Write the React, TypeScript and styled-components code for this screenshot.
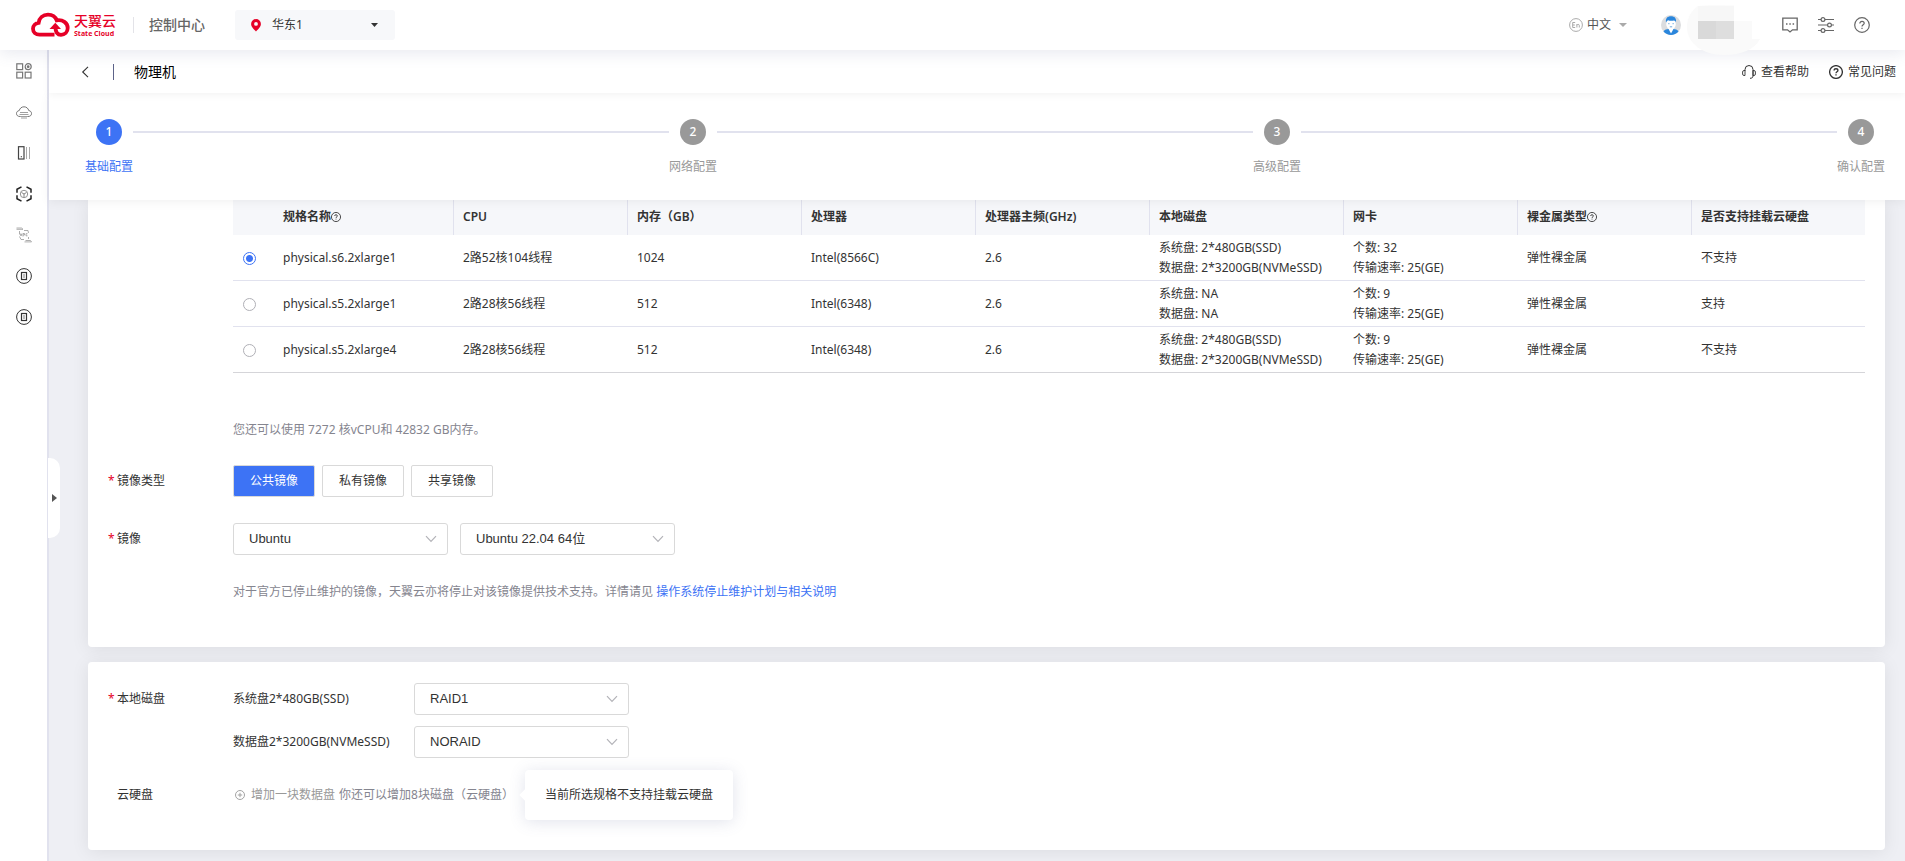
import React from "react";
import styled, { createGlobalStyle, css } from "styled-components";

const BLUE = "#3d73f5";
const INK = "#333333";
const MUTED = "#85858f";
const LINE = "#e1e2ee";

const GlobalStyle = createGlobalStyle`
  *, *::before, *::after { box-sizing: border-box; }
  body {
    margin: 0;
    color: ${INK};
    background: #eeeff4;
    font-family: "Noto Sans", "Noto Sans CJK SC", sans-serif;
    font-size: 12px;
    line-height: 20px;
  }
  button, select { font: inherit; color: inherit; }
  svg { display: block; flex: none; }
  a { text-decoration: none; color: inherit; }
`;

const Shell = styled.div`
  display: flex;
  flex-direction: column;
  min-height: 100vh;
`;

/* ---------- top bar ---------- */

const TopBar = styled.header`
  position: relative;
  z-index: 3;
  display: flex;
  align-items: center;
  height: 50px;
  padding: 0 35px 0 31px;
  background: #fff;
  box-shadow: 0 4px 14px rgba(90, 100, 150, 0.13);
`;

const Brand = styled.a`
  display: flex;
  align-items: center;
  gap: 4px;
  width: 87px;
  color: #e60027;
`;

const BrandText = styled.span`
  display: flex;
  flex-direction: column;
  white-space: nowrap;
`;

const BrandName = styled.strong`
  font-size: 14px;
  line-height: 18px;
  font-weight: 500;
`;

const BrandSub = styled.span`
  font-family: "Open Sans", sans-serif;
  font-size: 7px;
  line-height: 8px;
  font-weight: 700;
`;

const TopDivider = styled.span`
  width: 1px;
  height: 16px;
  margin: 0 15px;
  background: #e3e3e8;
`;

const ConsoleLink = styled.a`
  margin-right: 30px;
  font-size: 14px;
  font-weight: 500;
  color: #666;
`;

const RegionBox = styled.label`
  display: grid;
  align-items: center;
  width: 160px;
  height: 30px;
  & > * { grid-area: 1 / 1; }
  & > svg { z-index: 1; pointer-events: none; }
  & > svg:first-child { margin-left: 16px; }
  & > svg:last-child { justify-self: end; margin-right: 17px; }
`;

const RegionSelect = styled.select`
  appearance: none;
  width: 100%;
  height: 100%;
  padding: 0 30px 0 37px;
  border: 0;
  border-radius: 3px;
  background: #f7f8fa;
`;

const TopTools = styled.div`
  display: flex;
  align-items: center;
  align-self: stretch;
  margin-left: auto;
`;

const LanguageButton = styled.button`
  display: flex;
  align-items: center;
  gap: 4px;
  margin-right: 34px;
  padding: 0;
  border: 0;
  background: none;
  color: #555;
  & > svg:last-child { margin-left: 4px; }
`;

const UserButton = styled.button`
  display: flex;
  align-items: center;
  gap: 6px;
  height: 50px;
  margin-right: 22px;
  padding: 0;
  border: 0;
  background: none;
  & > svg { overflow: visible; }
`;

const IconGroup = styled.div`
  display: flex;
  gap: 20px;
`;

const IconButton = styled.button`
  padding: 0;
  border: 0;
  background: none;
  color: #666;
`;

/* ---------- frame ---------- */

const Body = styled.div`
  position: relative;
  display: flex;
  flex: 1;
`;

const Sidebar = styled.nav`
  display: flex;
  flex-direction: column;
  align-items: center;
  gap: 25px;
  flex: none;
  width: 49px;
  padding-top: 13px;
  background: #fff;
  border-right: 2px solid ${LINE};
`;

const SideLink = styled.a<{ $faint?: boolean }>`
  color: ${(p) => (p.$faint ? "#999" : "#444")};
`;

const PullTab = styled.button`
  position: absolute;
  left: 48px;
  top: 408px;
  z-index: 1;
  display: flex;
  align-items: center;
  width: 12px;
  height: 80px;
  padding: 0 0 0 4px;
  border: 0;
  border-radius: 0 10px 10px 0;
  background: #fff;
`;

const Main = styled.main`
  flex: 1;
  min-width: 0;
`;

const TitleBar = styled.div`
  position: relative;
  z-index: 2;
  display: flex;
  align-items: center;
  height: 43px;
  padding: 0 9px 0 31px;
  background: #fff;
  box-shadow: 0 2px 8px rgba(0, 0, 0, 0.05);
`;

const BackButton = styled.button`
  padding: 0;
  border: 0;
  background: none;
`;

const TitleDivider = styled.span`
  width: 1px;
  height: 16px;
  margin: 0 20px 0 22px;
  background: #5d6389;
`;

const Title = styled.h1`
  margin: 0;
  font-size: 14px;
  line-height: 20px;
  font-weight: 400;
  color: #000;
`;

const HelpLinks = styled.div`
  display: flex;
  gap: 20px;
  margin-left: auto;
`;

const HelpLink = styled.a`
  display: flex;
  align-items: center;
  gap: 5px;
`;

/* ---------- stepper ---------- */

const Steps = styled.ol`
  position: relative;
  z-index: 1;
  display: flex;
  margin: 0;
  height: 107px;
  padding: 26px 20px 0 36px;
  list-style: none;
  background: #fff;
  box-shadow: 0 2px 10px rgba(0, 0, 0, 0.06);
`;

const Step = styled.li<{ $active?: boolean }>`
  display: flex;
  flex: ${(p) => (p.$active ? "none" : "1")};
  color: ${(p) => (p.$active ? BLUE : "#999")};
  &::before {
    content: ${(p) => (p.$active ? "none" : '""')};
    flex: 1;
    height: 2px;
    margin-top: 12px;
    background: ${LINE};
  }
`;

const StepHead = styled.div`
  display: flex;
  flex-direction: column;
  align-items: center;
  gap: 12px;
  width: 48px;
  white-space: nowrap;
`;

const StepDot = styled.span<{ $active?: boolean }>`
  width: 26px;
  height: 26px;
  border-radius: 50%;
  background: ${(p) => (p.$active ? BLUE : "#999")};
  color: #fff;
  font-weight: 500;
  line-height: 26px;
  text-align: center;
`;

/* ---------- form cards ---------- */

const Content = styled.div`
  display: flex;
  flex-direction: column;
  gap: 15px;
  padding: 0 20px 11px 39px;
`;

const Card = styled.section<{ $joined?: boolean }>`
  padding: ${(p) => (p.$joined ? "0 20px 45px" : "21px 20px 45px")};
  border-radius: ${(p) => (p.$joined ? "0 0 4px 4px" : "4px")};
  background: #fff;
  box-shadow: 0 2px 18px rgba(0, 0, 0, 0.08);
`;

const Indent = styled.div`
  padding-left: 125px;
`;

const Hint = styled.p<{ $top: number; $bottom?: number }>`
  margin: ${(p) => p.$top}px 0 ${(p) => p.$bottom ?? 0}px;
  color: ${MUTED};
  a { color: ${BLUE}; }
`;

const FormRow = styled.div<{ $top?: number }>`
  display: flex;
  align-items: center;
  margin-top: ${(p) => p.$top ?? 0}px;
`;

const RowLabel = styled.span<{ $required?: boolean }>`
  flex: none;
  width: 125px;
  padding-left: 9px;
  ${(p) =>
    p.$required &&
    css`
      padding-left: 0;
      &::before {
        content: "*";
        display: inline-block;
        width: 9px;
        color: #e60027;
      }
    `}
`;

const DiskLabel = styled.label`
  flex: none;
  width: 181px;
`;

const Choices = styled.div`
  display: flex;
  gap: 7px;
`;

const Choice = styled.button<{ $on?: boolean }>`
  width: 82px;
  height: 32px;
  padding: 0;
  border: 1px solid #d9d9d9;
  border-radius: 2px;
  background: ${(p) => (p.$on ? BLUE : "#fff")};
  color: ${(p) => (p.$on ? "#fff" : INK)};
`;

const SelectPair = styled.div`
  display: flex;
  gap: 12px;
`;

const SelectBox = styled.span`
  display: grid;
  align-items: center;
  width: 215px;
  height: 32px;
  & > * { grid-area: 1 / 1; }
  & > svg {
    justify-self: end;
    margin-right: 11px;
    pointer-events: none;
  }
`;

const Select = styled.select`
  appearance: none;
  width: 100%;
  height: 100%;
  padding: 0 30px 0 15px;
  border: 1px solid #d9d9d9;
  border-radius: 3px;
  background: #fff;
  font-family: "Liberation Sans", "Noto Sans CJK SC", sans-serif;
  font-size: 13px;
`;

const AddLine = styled.div`
  position: relative;
  display: flex;
  gap: 2px;
  color: ${MUTED};
`;

const AddButton = styled.button`
  display: flex;
  align-items: center;
  gap: 6px;
  padding: 0 2px;
  border: 0;
  background: none;
  color: #999;
`;

const Tooltip = styled.div`
  position: absolute;
  top: 50%;
  left: calc(100% + 11px);
  transform: translateY(-50%);
  padding: 15px 20px;
  border-radius: 4px;
  background: #fff;
  color: ${INK};
  white-space: nowrap;
  box-shadow: 0 2px 16px rgba(90, 100, 150, 0.18);
  &::before {
    content: "";
    position: absolute;
    left: -4px;
    top: 21px;
    width: 8px;
    height: 8px;
    background: #fff;
    transform: rotate(45deg);
  }
`;

/* ---------- table ---------- */

const Table = styled.table`
  width: 100%;
  table-layout: fixed;
  border-spacing: 0;
`;

const Th = styled.th<{ $width?: number; $divided?: boolean }>`
  width: ${(p) => (p.$width ? `${p.$width}px` : "auto")};
  height: 35px;
  padding: 0 0 2px ${(p) => (p.$divided ? 9 : 10)}px;
  border-left: ${(p) => (p.$divided ? `1px solid ${LINE}` : "0")};
  background: #f6f7fa;
  font-weight: 600;
  text-align: left;
  white-space: nowrap;
  svg { display: inline-block; vertical-align: -1px; }
`;

const Td = styled.td`
  padding: 3px 0 2px 10px;
  border-bottom: 1px solid ${LINE};
  white-space: nowrap;
  tr:last-child & { border-bottom-color: #d5d5d9; }
`;

const Radio = styled.input`
  appearance: none;
  display: block;
  width: 13px;
  height: 13px;
  margin: 0;
  border: 1px solid #b0b0b6;
  border-radius: 50%;
  background: #fff;
  &:checked {
    border-color: ${BLUE};
    background: radial-gradient(circle, ${BLUE} 3px, #fff 4px);
  }
`;

/* ---------- drawings ---------- */

const QuestionIcon = ({ size, weight = 1 }: { size: number; weight?: number }) => (
  <svg width={size} height={size} viewBox="0 0 16 16" fill="none" stroke="currentColor" strokeWidth={weight}>
    <circle cx="8" cy="8" r="7.3" />
    <path d="M5.8 6.4c0-1.3 1-2.1 2.2-2.1s2.2.8 2.2 2c0 1.400-2.200 1.600-2.200 3.200" />
    <path d="M8 10.700v1.300" />
  </svg>
);

const Caret = ({ width, height, color }: { width: number; height: number; color: string }) => (
  <svg width={width} height={height} viewBox="0 0 8 5" preserveAspectRatio="none" fill={color}>
    <path d="M0 0h8L4 5z" />
  </svg>
);

const Chevron = () => (
  <svg width="12" height="8" viewBox="0 0 12 8" fill="none" stroke="#b3b3b8" strokeWidth="1.200">
    <path d="M1 1.200l5 5.300 5-5.300" />
  </svg>
);

const BrandMark = () => (
  <svg width="39" height="26" viewBox="0 0 39 26" fill="none" stroke="currentColor" strokeWidth="3.800">
    <path d="M23.500 22.700H8.500C4.800 22.700 2 20.200 2 16.800c0-3.300 2.400-5.500 5.600-5.900C8.200 6 12 2.700 17 2.700c4.200 0 7.400 2.200 8.700 5.600 6-.9 11 2.400 11 7.700 0 4-3 6.800-6.700 6.800-4 0-5.500-3-5.700-8" />
    <path d="M18.500 17l5.800-6.200 5.700 6.200z" fill="currentColor" stroke="none" />
  </svg>
);

const sideIcon = { width: 16, height: 16, viewBox: "0 0 16 16", fill: "none", stroke: "currentColor" };

const AppsIcon = () => (
  <svg {...sideIcon} stroke="#777" strokeWidth="1.200">
    <rect x=".8" y=".8" width="5.800" height="5.800" />
    <rect x=".8" y="9.200" width="5.800" height="5.800" />
    <rect x="9.200" y="9.200" width="5.800" height="5.800" />
    <circle cx="12.200" cy="3.700" r="3" />
    <circle cx="12.200" cy="3.700" r=".8" fill="currentColor" />
  </svg>
);

const CloudIcon = () => (
  <svg {...sideIcon} stroke="#666">
    <path d="M4 12.500c-2 0-3.500-1-3.500-3 0-1.700 1.200-2.700 2.700-2.900C3.800 4.300 5.600 2.800 8 2.800s4.200 1.500 4.800 3.800c1.500.2 2.700 1.200 2.700 2.900 0 2-1.500 3-3.500 3" strokeWidth=".9" />
    <path d="M4 8.500h8M3.500 10.500h9M4 12.500h8M5 14h6" stroke="#888" strokeWidth=".8" />
  </svg>
);

const ServerIcon = () => (
  <svg {...sideIcon}>
    <rect x="2.500" y="1.700" width="5.500" height="12.300" strokeWidth="1.200" />
    <path d="M5.300 11v1.300" />
    <path d="M10.500 2v12M13.500 2v12" stroke="#aaa" />
  </svg>
);

const HexIcon = () => (
  <svg {...sideIcon} stroke="#222">
    <path d="M5.500.8L1 3.300v3.500M1 9.200v3.500l4.500 2.500M10.500.8L15 3.300v3.500M15 9.200v3.500l-4.500 2.500" strokeWidth="1.500" />
    <circle cx="8" cy="8" r="3.700" stroke="#888" strokeWidth=".9" />
    <path d="M5.500 6.500L8 8l2.500-1.500M8 8v3" stroke="#777" strokeWidth=".9" />
  </svg>
);

const VpcIcon = () => (
  <svg {...sideIcon} strokeWidth=".8">
    <path d="M.5 2.300h6.500M.5 1h5l1.500 1.300M3.500 4v3.500M3.500 9.500L5 12.500h3M8 3.500h4l.5 2.500M12.500 10v2M8.500 14.900h7M9.500 13.500h5l1 1.400" />
    <path d="M4.300 6.500l.7 2.500.9-2.500M7 9.500v-3h1.500v1.500H7M11.500 6.700H10v2.100h1.500" />
  </svg>
);

const RingIcon = () => (
  <svg {...sideIcon} stroke="#333">
    <circle cx="8" cy="8" r="7.400" strokeWidth="1" />
    <rect x="5.500" y="4.500" width="5" height="7" strokeWidth="1.200" />
    <path d="M8 6v4" stroke="#aaa" strokeWidth="1.500" />
  </svg>
);

const PinIcon = () => (
  <svg width="10" height="13" viewBox="0 0 10 13" fill="#e60027">
    <path fillRule="evenodd" d="M5 0a4.900 4.900 0 0 1 4.900 4.900C9.900 8 6.500 10.500 5 12.500 3.500 10.500.1 8 .1 4.900A4.900 4.900 0 0 1 5 0zm0 3a1.900 1.900 0 1 0 0 3.800A1.900 1.900 0 0 0 5 3z" />
  </svg>
);

const EnIcon = () => (
  <svg width="14" height="14" viewBox="0 0 14 14" fill="none" stroke="#a0a0a0" strokeWidth=".9">
    <circle cx="7" cy="7" r="6.400" />
    <path d="M6.200 4.500H3.700v5h2.500M3.700 7h2.200M7.900 9.500V6M7.900 7.200c.4-1 2.400-1.200 2.400.3v2" />
  </svg>
);

const AvatarIcon = () => (
  <svg width="20" height="20" viewBox="0 0 20 20">
    <circle cx="10" cy="10" r="10" fill="#dcdddf" />
    <path d="M2.500 16.500C3.500 14.600 6 14.200 7.500 14h5c1.500.2 4 .6 5 2.500A10 10 0 0 1 2.500 16.500z" fill="#2a86dc" />
    <path d="M7.300 13.500h5.400L10 18.500z" fill="#fff" />
    <ellipse cx="10" cy="9" rx="4.800" ry="5.500" fill="#fff" />
    <path d="M5 7.500C4.300 3.300 6.500 1.300 10 1.300s5.700 2 5 6.200C14.500 6 14 5.600 13 5.500c-2 .5-4.500.3-6-.3C6 5.700 5.400 6.500 5 7.500z" fill="#2a86dc" />
    <path d="M7.200 8.700h1.300M11.500 8.700h1.300M8.800 11.800h2.400" stroke="#4b93d8" strokeWidth=".8" />
  </svg>
);

const HiddenName = () => (
  <svg width="73" height="50" viewBox="0 0 73 50">
    <path d="M11 6C18 5 28 5 47 5.500V21H65v18h8c-5 10-18 16-36 16C14 55 0 42 0 27c0-9 4-16 11-21z" fill="#fafafa" />
    <path d="M11 6h36v15H11z" fill="#f7f7f7" />
    <path d="M11 21h18v18H11z" fill="#d9d9d9" />
    <path d="M29 21h18v18H29z" fill="#dedede" />
  </svg>
);

const MessageIcon = () => (
  <svg width="16" height="16" viewBox="0 0 16 16" fill="none" stroke="currentColor" strokeWidth="1.300">
    <path d="M.8 1.200h14.400v11.600h-4.700L8 15l-2.500-2.200H.8z" />
    <path d="M4 7h1.500M7.300 7h1.500M10.600 7h1.500" strokeWidth="1.500" />
  </svg>
);

const SlidersIcon = () => (
  <svg width="16" height="16" viewBox="0 0 16 16" fill="none" stroke="currentColor" strokeWidth="1.200">
    <path d="M0 2.500h3M7 2.500h9M0 8h9.500M13.500 8H16M0 13.500h3M7 13.500h9" />
    <circle cx="5" cy="2.500" r="1.900" />
    <circle cx="11.500" cy="8" r="1.900" />
    <circle cx="5" cy="13.500" r="1.900" />
  </svg>
);

const HeadsetIcon = () => (
  <svg width="14" height="14" viewBox="0 0 14 14" fill="none" stroke="currentColor">
    <path d="M3 6V4.500a4 4 0 0 1 8 0V11c0 1.500-1 2.300-3 2.300" />
    <path d="M3 5.500v5H2A1.500 1.500 0 0 1 .6 9V7A1.500 1.500 0 0 1 2 5.500zM11 5.500v5h1A1.500 1.500 0 0 0 13.400 9V7A1.500 1.500 0 0 0 12 5.500z" strokeWidth=".9" />
  </svg>
);

const BackIcon = () => (
  <svg width="11" height="12" viewBox="0 0 11 12" fill="none" stroke="#333" strokeWidth="1.100">
    <path d="M8 .8L2.700 6 8 11.200" />
  </svg>
);

const PlusIcon = () => (
  <svg width="10" height="10" viewBox="0 0 10 10" fill="none" stroke="currentColor" strokeWidth=".9">
    <circle cx="5" cy="5" r="4.500" />
    <path d="M2.800 5h4.400M5 2.800v4.400" />
  </svg>
);

/* ---------- data ---------- */

const sideItems = [
  { name: "总览", icon: <AppsIcon /> },
  { name: "云主机", icon: <CloudIcon /> },
  { name: "物理机", icon: <ServerIcon /> },
  { name: "容器", icon: <HexIcon /> },
  { name: "虚拟私有云", icon: <VpcIcon />, faint: true },
  { name: "镜像服务", icon: <RingIcon /> },
  { name: "存储服务", icon: <RingIcon /> },
];

const steps = ["基础配置", "网络配置", "高级配置", "确认配置"];

const columns: { title: string; width?: number; help?: boolean }[] = [
  { title: "规格名称", width: 180, help: true },
  { title: "CPU" },
  { title: "内存（GB）" },
  { title: "处理器" },
  { title: "处理器主频(GHz)" },
  { title: "本地磁盘", width: 194 },
  { title: "网卡" },
  { title: "裸金属类型", help: true },
  { title: "是否支持挂载云硬盘" },
];

const specs = [
  { name: "physical.s6.2xlarge1", cpu: "2路52核104线程", memory: "1024", chip: "Intel(8566C)", system: "2*480GB(SSD)", data: "2*3200GB(NVMeSSD)", nics: 32, mount: "不支持" },
  { name: "physical.s5.2xlarge1", cpu: "2路28核56线程", memory: "512", chip: "Intel(6348)", system: "NA", data: "NA", nics: 9, mount: "支持" },
  { name: "physical.s5.2xlarge4", cpu: "2路28核56线程", memory: "512", chip: "Intel(6348)", system: "2*480GB(SSD)", data: "2*3200GB(NVMeSSD)", nics: 9, mount: "不支持" },
];

const imageTypes = ["公共镜像", "私有镜像", "共享镜像"];

const DropDown = ({ id, label, value }: { id: string; label?: string; value: string }) => (
  <SelectBox>
    <Select id={id} aria-label={label} defaultValue={value}>
      <option>{value}</option>
    </Select>
    <Chevron />
  </SelectBox>
);

export default function App() {
  return (
    <Shell>
      <GlobalStyle />
      <TopBar>
        <Brand href="#home">
          <BrandMark />
          <BrandText>
            <BrandName>天翼云</BrandName>
            <BrandSub>State Cloud</BrandSub>
          </BrandText>
        </Brand>
        <TopDivider />
        <ConsoleLink href="#console">控制中心</ConsoleLink>
        <RegionBox>
          <PinIcon />
          <RegionSelect aria-label="区域">
            <option>华东1</option>
          </RegionSelect>
          <Caret width={7} height={4} color="#333" />
        </RegionBox>
        <TopTools>
          <LanguageButton type="button">
            <EnIcon />
            中文
            <Caret width={8} height={4} color="#aaa" />
          </LanguageButton>
          <UserButton type="button" aria-label="账号">
            <AvatarIcon />
            <HiddenName />
          </UserButton>
          <IconGroup>
            <IconButton type="button" aria-label="消息"><MessageIcon /></IconButton>
            <IconButton type="button" aria-label="设置"><SlidersIcon /></IconButton>
            <IconButton type="button" aria-label="帮助"><QuestionIcon size={16} weight={1.2} /></IconButton>
          </IconGroup>
        </TopTools>
      </TopBar>

      <Body>
        <Sidebar>
          {sideItems.map((item) => (
            <SideLink key={item.name} href="#service" aria-label={item.name} $faint={item.faint}>
              {item.icon}
            </SideLink>
          ))}
        </Sidebar>
        <PullTab type="button" aria-label="展开菜单">
          <svg width="5" height="8" viewBox="0 0 5 8" fill="#555"><path d="M0 0l5 4-5 4z" /></svg>
        </PullTab>

        <Main>
          <TitleBar>
            <BackButton type="button" aria-label="返回"><BackIcon /></BackButton>
            <TitleDivider />
            <Title>物理机</Title>
            <HelpLinks>
              <HelpLink href="#help"><HeadsetIcon />查看帮助</HelpLink>
              <HelpLink href="#faq"><QuestionIcon size={14} weight={1.5} />常见问题</HelpLink>
            </HelpLinks>
          </TitleBar>

          <Steps>
            {steps.map((name, i) => (
              <Step key={name} $active={i === 0}>
                <StepHead>
                  <StepDot $active={i === 0}>{i + 1}</StepDot>
                  <span>{name}</span>
                </StepHead>
              </Step>
            ))}
          </Steps>

          <Content>
            <Card $joined>
              <Indent>
                <Table>
                  <thead>
                    <tr>
                      <Th $width={40} aria-label="选择" />
                      {columns.map((c, i) => (
                        <Th key={c.title} $width={c.width} $divided={i > 0}>
                          {c.title}
                          {c.help && <QuestionIcon size={10} weight={1.4} />}
                        </Th>
                      ))}
                    </tr>
                  </thead>
                  <tbody>
                    {specs.map((s, i) => (
                      <tr key={s.name}>
                        <Td><Radio type="radio" name="spec" aria-label={s.name} defaultChecked={i === 0} /></Td>
                        <Td>{s.name}</Td>
                        <Td>{s.cpu}</Td>
                        <Td>{s.memory}</Td>
                        <Td>{s.chip}</Td>
                        <Td>2.6</Td>
                        <Td>系统盘: {s.system}<br />数据盘: {s.data}</Td>
                        <Td>个数: {s.nics}<br />传输速率: 25(GE)</Td>
                        <Td>弹性裸金属</Td>
                        <Td>{s.mount}</Td>
                      </tr>
                    ))}
                  </tbody>
                </Table>
                <Hint $top={47} $bottom={25}>您还可以使用 7272 核vCPU和 42832 GB内存。</Hint>
              </Indent>

              <FormRow>
                <RowLabel $required>镜像类型</RowLabel>
                <Choices>
                  {imageTypes.map((t, i) => (
                    <Choice key={t} type="button" $on={i === 0}>{t}</Choice>
                  ))}
                </Choices>
              </FormRow>
              <FormRow $top={26}>
                <RowLabel $required>镜像</RowLabel>
                <SelectPair>
                  <DropDown id="os" label="操作系统" value="Ubuntu" />
                  <DropDown id="os-version" label="系统版本" value="Ubuntu 22.04 64位" />
                </SelectPair>
              </FormRow>
              <Indent>
                <Hint $top={27}>
                  对于官方已停止维护的镜像，天翼云亦将停止对该镜像提供技术支持。详情请见 <a href="#plan">操作系统停止维护计划与相关说明</a>
                </Hint>
              </Indent>
            </Card>

            <Card>
              <FormRow>
                <RowLabel $required>本地磁盘</RowLabel>
                <DiskLabel htmlFor="system-raid">系统盘2*480GB(SSD)</DiskLabel>
                <DropDown id="system-raid" value="RAID1" />
              </FormRow>
              <FormRow $top={11}>
                <RowLabel />
                <DiskLabel htmlFor="data-raid">数据盘2*3200GB(NVMeSSD)</DiskLabel>
                <DropDown id="data-raid" value="NORAID" />
              </FormRow>
              <FormRow $top={27}>
                <RowLabel>云硬盘</RowLabel>
                <AddLine>
                  <AddButton type="button" disabled><PlusIcon />增加一块数据盘</AddButton>
                  <span>你还可以增加8块磁盘（云硬盘）</span>
                  <Tooltip role="tooltip">当前所选规格不支持挂载云硬盘</Tooltip>
                </AddLine>
              </FormRow>
            </Card>
          </Content>
        </Main>
      </Body>
    </Shell>
  );
}
